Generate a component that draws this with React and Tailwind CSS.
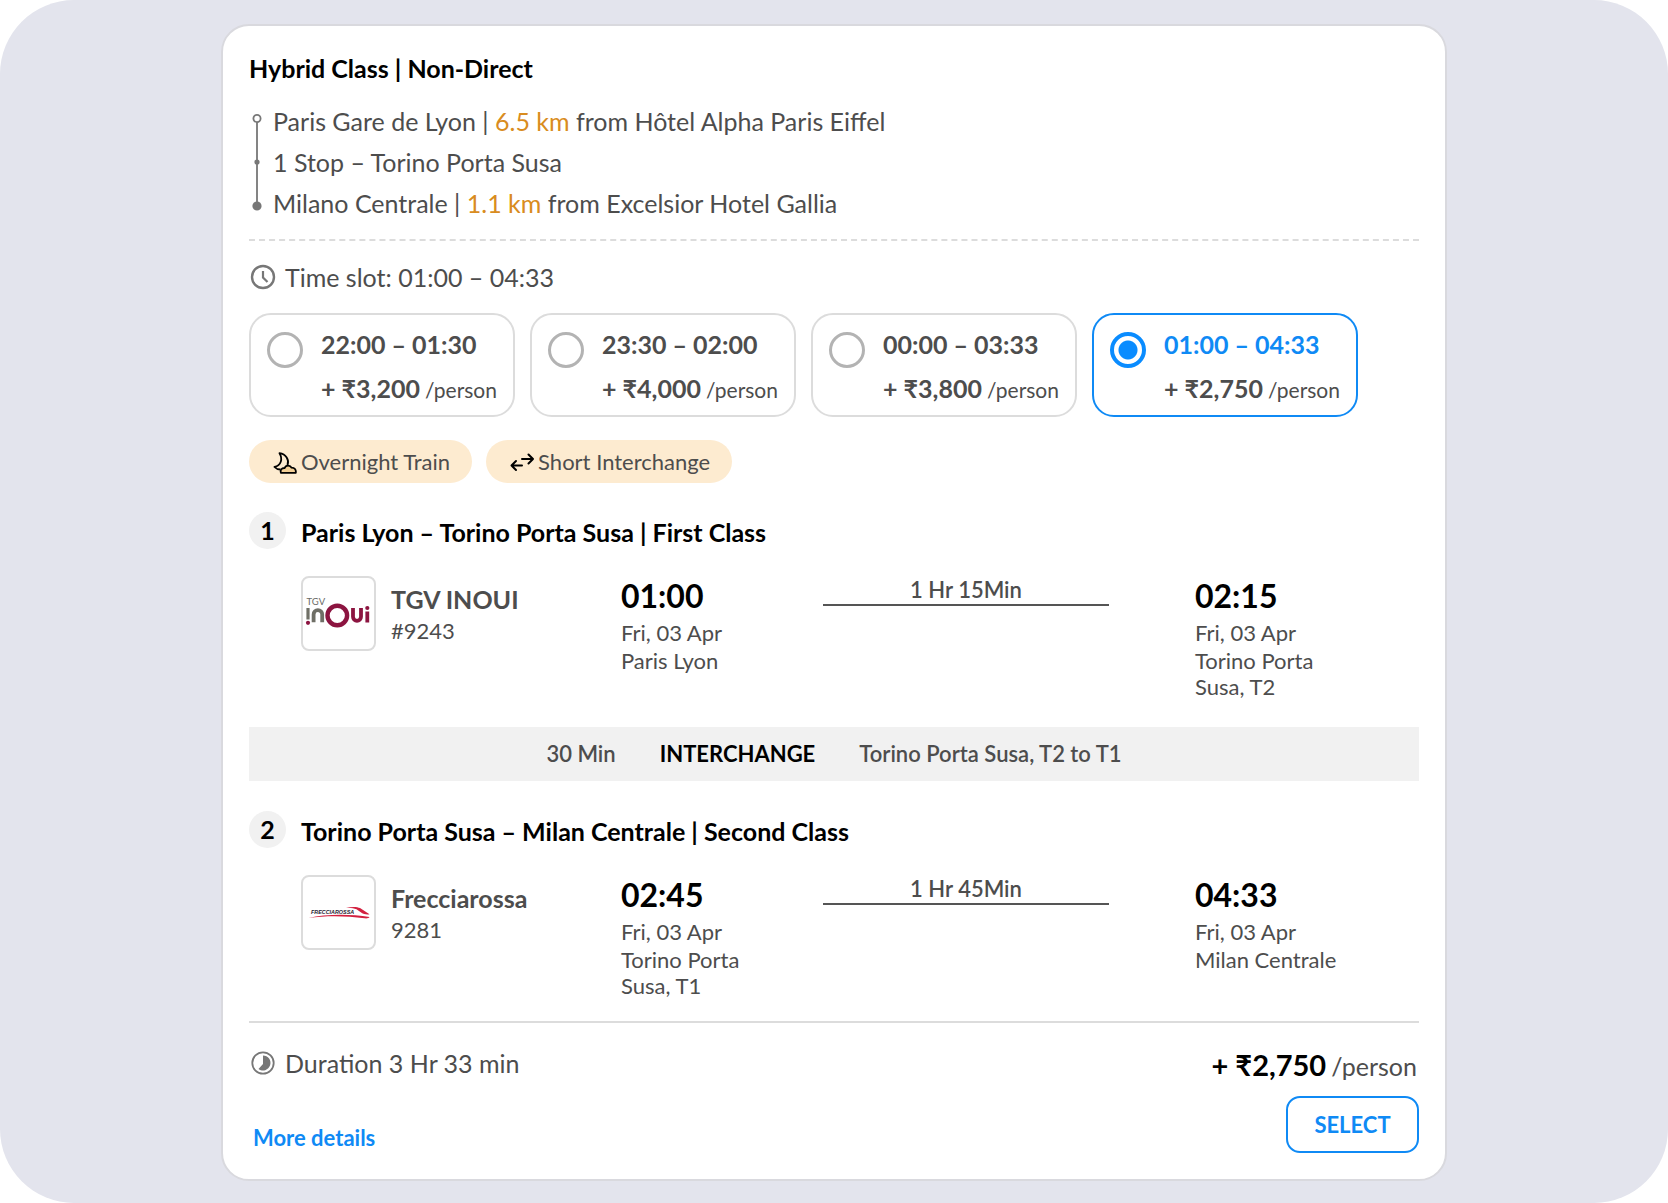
import { useState } from 'react'

const slots = [
  { id: 'slot-1', time: '22:00 – 01:30', price: '₹3,200' },
  { id: 'slot-2', time: '23:30 – 02:00', price: '₹4,000' },
  { id: 'slot-3', time: '00:00 – 03:33', price: '₹3,800' },
  { id: 'slot-4', time: '01:00 – 04:33', price: '₹2,750' },
]

const segments = [
  {
    title: 'Paris Lyon – Torino Porta Susa | First Class',
    logo: InouiLogo,
    train: 'TGV INOUI',
    number: '#9243',
    length: '1 Hr 15Min',
    from: { time: '01:00', date: 'Fri, 03 Apr', station: 'Paris Lyon' },
    to: { time: '02:15', date: 'Fri, 03 Apr', station: 'Torino Porta Susa, T2' },
  },
  {
    title: 'Torino Porta Susa – Milan Centrale | Second Class',
    logo: FrecciarossaLogo,
    train: 'Frecciarossa',
    number: '9281',
    length: '1 Hr 45Min',
    from: { time: '02:45', date: 'Fri, 03 Apr', station: 'Torino Porta Susa, T1' },
    to: { time: '04:33', date: 'Fri, 03 Apr', station: 'Milan Centrale' },
  },
]

function InouiLogo() {
  return (
    <svg viewBox="0 0 71 71" className="h-full w-full" aria-hidden="true">
      <text x="3.5" y="27" fontFamily="Lato" fontSize="9.5" fill="#6b6b66">TGV</text>
      <g fill="none" strokeWidth="3.8">
        <path d="M5 30v11.500" stroke="#6f6f66" strokeWidth="3.2" />
        <path d="M10.600 44.300V36.500a4.300 4.300 0 0 1 8.600 0v7.800" stroke="#6f6f66" />
        <circle cx="34.300" cy="37.500" r="9.800" stroke="#8c1440" strokeWidth="4.400" />
        <path d="M50 30v8.800a4 4 0 0 0 8 0V30M64.300 33.500v11" stroke="#8c1440" />
      </g>
      <circle cx="5" cy="44.800" r="2.100" fill="#8c1440" />
      <circle cx="64.300" cy="30" r="2.100" fill="#8c1440" />
    </svg>
  )
}

function FrecciarossaLogo() {
  return (
    <svg viewBox="0 0 71 71" className="h-full w-full" aria-hidden="true">
      <text x="8" y="36.500" fontFamily="Liberation Sans" fontWeight="700" fontStyle="italic" fontSize="5.400" fill="#1f2130">FRECCIAROSSA</text>
      <path d="M43 31c5-1.500 11-1.500 14 0l9.500 6.200c-3 .6-6-.2-8-1.500L53.500 32.200c-3-1.200-6-1.400-10.500-1.200z" fill="#d3203f" />
      <path d="M5.500 41c17-4.300 42-4.300 61-1-.5 1.300-3 1.600-5 1.300-18-2.600-38-3-56-.3z" fill="#d3203f" />
    </svg>
  )
}

function ClockIcon() {
  return (
    <svg viewBox="0 0 28 28" className="h-7 w-7" fill="none" stroke="#777" aria-hidden="true">
      <circle cx="14" cy="14" r="11" strokeWidth="2.400" />
      <path d="M14 8v6.500l4.500 4.500" strokeWidth="2.200" />
    </svg>
  )
}

function DurationIcon() {
  return (
    <svg viewBox="0 0 28 28" className="h-7 w-7" aria-hidden="true">
      <circle cx="14" cy="14" r="10.700" fill="none" stroke="#777" strokeWidth="1.800" />
      <path d="M14 6.500a7.500 7.500 0 1 1-4.500 13.500L14 15z" fill="#777" />
    </svg>
  )
}

function NightIcon() {
  return (
    <svg viewBox="0 0 24 24" className="h-6 w-6" fill="none" stroke="#000" strokeWidth="1.800" strokeLinejoin="round" aria-hidden="true">
      <path d="M14.500 15C16.500 10 13 4 6.500 3.200 10 9 8 15.500 1.500 17c1.500 1.700 3.500 2.500 6 2.500" />
      <path d="M8 22.800c-1.200-2.800.8-5 3.700-4.800 1-3.200 5.500-3.200 6.800-.4 3.200-.1 4.700 2.200 4.300 5.200z" fill="#f3cf96" />
    </svg>
  )
}

function SwapIcon() {
  return (
    <svg viewBox="0 0 24 24" className="h-6 w-6" fill="none" stroke="#000" strokeWidth="2" strokeLinecap="round" strokeLinejoin="round" aria-hidden="true">
      <path d="M12 9h11M18.500 4.500L23 9l-4.500 4.500" />
      <path d="M12 15.500H1.500M6 11l-4.500 4.500L6 20" />
    </svg>
  )
}

function RouteLine() {
  return (
    <svg viewBox="0 0 16 124" className="h-[124px] w-4" aria-hidden="true">
      <path d="M8 22v86" stroke="#777" strokeWidth="1.800" />
      <circle cx="8" cy="18.500" r="3.600" fill="#fff" stroke="#777" strokeWidth="1.800" />
      <circle cx="8" cy="62" r="2.600" fill="#777" />
      <circle cx="8" cy="106" r="4.600" fill="#777" />
    </svg>
  )
}

function SlotCard({ slot, checked, onSelect }) {
  return (
    <label
      htmlFor={slot.id}
      className={[
        'flex h-[104px] w-[266px] cursor-pointer items-start gap-[18px] rounded-[22px] border-2 px-4 pt-[9px]',
        checked ? 'border-[#0f8af5]' : 'border-[#dcdcdc]',
      ].join(' ')}
    >
      <input
        id={slot.id}
        type="radio"
        name="slot"
        checked={checked}
        onChange={() => onSelect(slot.id)}
        className="mt-2 size-9 shrink-0 appearance-none rounded-full border-[3px] border-[#b3b3b3] checked:border-4 checked:border-[#0a8cff] checked:bg-[radial-gradient(circle,#0a8cff_9px,#fff_10px)]"
      />
      <span className="flex flex-col whitespace-nowrap text-[25px] font-bold">
        <span className={checked ? 'leading-10 text-[#0f8af5]' : 'leading-10'}>{slot.time}</span>
        <span className="leading-[48px]">
          + {slot.price}
          <span className="ml-[5px] text-[21px] font-normal">/person</span>
        </span>
      </span>
    </label>
  )
}

function Stop({ stop }) {
  return (
    <div className="w-[150px] text-[22px] leading-[26px]">
      <p className="text-[32px] font-bold leading-10 text-black">{stop.time}</p>
      <p className="mt-[3px] leading-7">{stop.date}</p>
      <p className="mt-px">{stop.station}</p>
    </div>
  )
}

function Segment({ index, segment }) {
  const Logo = segment.logo

  return (
    <section>
      <h3 className="flex items-start gap-[15px] text-[25px] font-bold leading-[41px] text-black">
        <span className="size-[37px] rounded-full bg-[#f1f1f1] text-center leading-[37px]">{index}</span>
        {segment.title}
      </h3>
      <div className="mt-[23px] grid grid-cols-[320px_202px_1fr_224px] pl-[52px]">
        <div className="flex gap-[15px]">
          <div className="size-[75px] rounded-lg border-2 border-[#dcdcdc]">
            <Logo />
          </div>
          <div>
            <p className="mt-[7px] text-[25px] font-bold leading-8">{segment.train}</p>
            <p className="text-[22px] leading-8">{segment.number}</p>
          </div>
        </div>
        <Stop stop={segment.from} />
        <div className="mr-[86px] h-[30px] border-b-2 border-[#555] text-center text-[22px] font-semibold leading-7">
          {segment.length}
        </div>
        <Stop stop={segment.to} />
      </div>
    </section>
  )
}

export default function App() {
  const [selected, setSelected] = useState('slot-4')

  return (
    <div className="min-h-screen rounded-[74px] bg-[#e3e4ed] pb-[22px] pt-6 font-['Lato','Noto_Sans',sans-serif] text-[#4d4d4d]">
      <main className="mx-auto max-w-[1226px] rounded-[28px] border-2 border-[#d9d9de] bg-white px-[26px] pb-[26px] pt-[22px]">
        <h2 className="text-[25px] font-bold leading-10 text-black">Hybrid Class | Non-Direct</h2>

        <div className="mt-3 flex gap-2">
          <RouteLine />
          <ul className="pt-px text-[25px] leading-[41px]">
            <li>Paris Gare de Lyon | <span className="text-[#d98c20]">6.5 km</span> from Hôtel Alpha Paris Eiffel</li>
            <li>1 Stop – Torino Porta Susa</li>
            <li>Milano Centrale | <span className="text-[#d98c20]">1.1 km</span> from Excelsior Hotel Gallia</li>
          </ul>
        </div>

        <hr className="mt-[15px] border-t-2 border-dashed border-[#dcdcdc]" />

        <div className="mt-4 flex items-center gap-2 text-[25px] leading-10">
          <ClockIcon />
          Time slot: 01:00 – 04:33
        </div>

        <div className="mt-4 flex flex-wrap gap-[15px]">
          {slots.map((slot) => (
            <SlotCard key={slot.id} slot={slot} checked={slot.id === selected} onSelect={setSelected} />
          ))}
        </div>

        <div className="mt-[23px] flex gap-[14px] text-[22px] leading-[43px]">
          <span className="flex items-center gap-1 rounded-full bg-[#fdebd0] pl-6 pr-[22px]">
            <NightIcon />
            Overnight Train
          </span>
          <span className="flex items-center gap-1 rounded-full bg-[#fdebd0] pl-6 pr-[22px]">
            <SwapIcon />
            Short Interchange
          </span>
        </div>

        <div className="mt-[29px]">
          <Segment index={1} segment={segments[0]} />
          <div className="mb-[30px] mt-[27px] flex justify-center gap-11 bg-[#f1f1f1] text-[22px] font-semibold leading-[54px]">
            <span>30 Min</span>
            <span className="font-bold text-black">INTERCHANGE</span>
            <span>Torino Porta Susa, T2 to T1</span>
          </div>
          <Segment index={2} segment={segments[1]} />
        </div>

        <footer className="mt-[22px] flex justify-between border-t-2 border-[#dcdcdc] pt-5">
          <div>
            <p className="flex items-center gap-2 text-[25px] leading-10">
              <DurationIcon />
              Duration 3 Hr 33 min
            </p>
            <a href="#details" className="ml-1 mt-[41px] block text-[22px] font-bold leading-7 text-[#0f8af5]">More details</a>
          </div>
          <div className="flex flex-col items-end">
            <p className="pr-0.5 text-[25px] leading-[44px]">
              <span className="mr-[5px] text-[29px] font-bold text-black">+ ₹2,750</span>
              /person
            </p>
            <button type="button" className="mt-2 h-[57px] w-[133px] rounded-[14px] border-2 border-[#0f8af5] text-[22px] font-bold text-[#0f8af5]">
              SELECT
            </button>
          </div>
        </footer>
      </main>
    </div>
  )
}
